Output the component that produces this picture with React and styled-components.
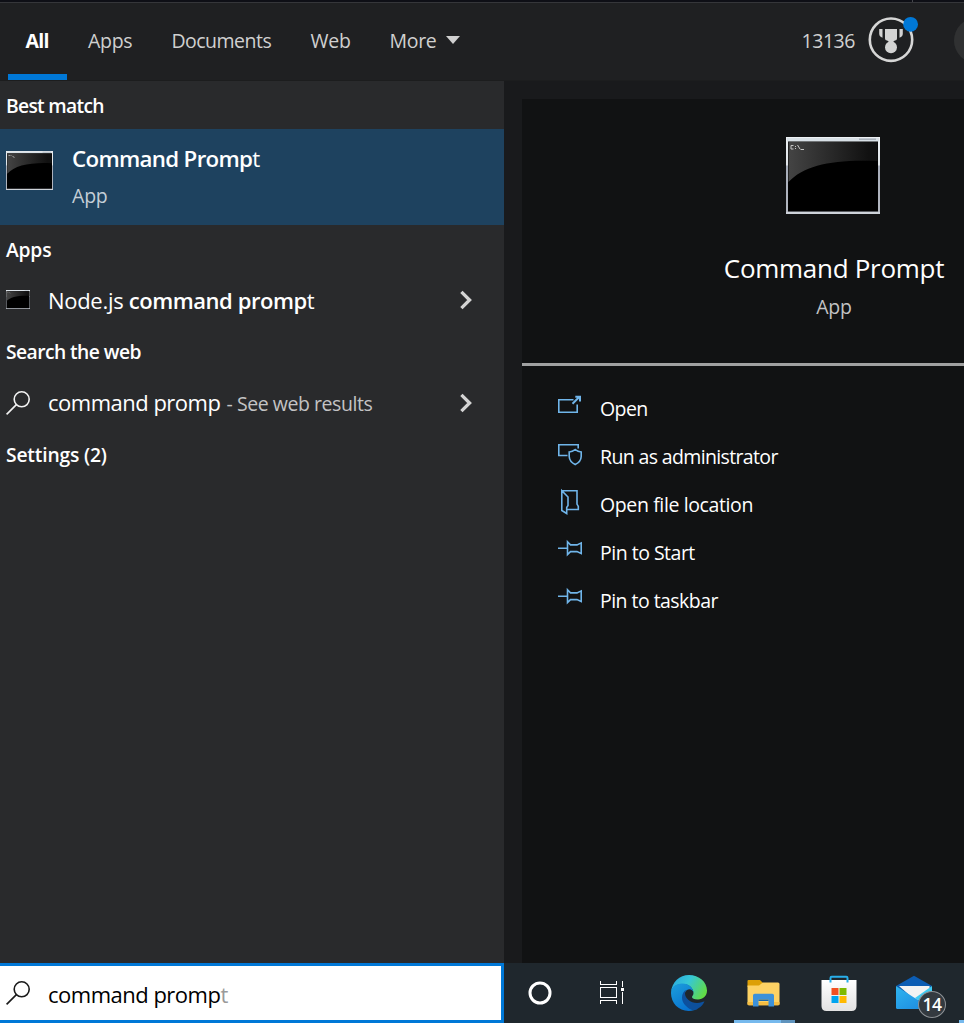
import React from "react";
import styled, { createGlobalStyle } from "styled-components";

const GlobalStyle = createGlobalStyle`
  * { box-sizing: border-box; }
  body {
    margin: 0;
    overflow: hidden;
    background: #111213;
    font-family: "Open Sans", "Noto Sans", sans-serif;
  }
  svg { display: block; flex: none; }
`;

const Screen = styled.div`
  width: 964px;
  height: 1023px;
  display: flex;
  flex-direction: column;
  overflow: hidden;
`;

const TopEdge = styled.div`
  height: 3px;
  flex: none;
  display: flex;
  background: #0e0f16;
  border-bottom: 1px solid #35363a;
`;

const TopTick = styled.div`
  width: 1px;
  height: 2px;
  margin-left: 912px;
  background: #45464b;
`;

const Header = styled.header`
  height: 78px;
  flex: none;
  display: flex;
  background: #1f2022;
  border-bottom: 1px solid #1c1d1e;
`;

const Label = styled.span`
  font-size: ${(p) => p.$size || 19.5}px;
  font-weight: ${(p) => p.$weight || 400};
  letter-spacing: ${(p) => p.$track || 0}px;
  color: ${(p) => p.$color || "#ffffff"};
  line-height: 28px;
  white-space: pre;
`;

const Tabs = styled.nav`
  display: flex;
  flex: none;
  height: 77px;
  padding-left: 8px;
`;

const Tab = styled.div`
  width: ${(p) => p.$width}px;
  height: 77px;
  display: flex;
  gap: 9px;
  padding: 24px 0 0 ${(p) => p.$inset}px;
  border-bottom: 6px solid ${(p) => (p.$active ? "#0078d7" : "transparent")};
`;

const Caret = styled.span`
  width: 0;
  height: 0;
  margin-top: 9px;
  border: 7.5px solid transparent;
  border-top: 8px solid #d0d0d0;
  border-bottom: 0;
`;

const Account = styled.div`
  flex: 1;
  display: flex;
  justify-content: flex-end;
  padding-top: 11px;
`;

const Points = styled.div`
  padding-top: 13px;
  margin-right: 13px;
`;

const Avatar = styled.div`
  width: 10px;
  height: 46px;
  margin: 4px 0 0 36px;
  overflow: hidden;
  &::before {
    content: "";
    display: block;
    width: 45px;
    height: 45px;
    border-radius: 50%;
    background: #303132;
  }
`;

const Body = styled.main`
  flex: 1;
  display: flex;
  min-height: 0;
`;

const Results = styled.section`
  width: 504px;
  flex: none;
  background: #292a2c;
`;

const SectionTitle = styled.div`
  height: ${(p) => p.$height}px;
  display: flex;
  align-items: center;
  padding: ${(p) => p.$drop || 0}px 0 0 6px;
`;

const BestMatch = styled.div`
  height: 96px;
  display: flex;
  gap: 19px;
  padding: 22px 0 0 6px;
  background: #1e425f;
`;

const BestText = styled.div`
  display: flex;
  flex-direction: column;
  gap: 9px;
  margin-top: -6px;
`;

const ResultRow = styled.div`
  height: 51px;
  display: flex;
  align-items: center;
  padding: 0 32px 0 6px;
`;

const RowText = styled.div`
  flex: 1;
  margin-left: 18px;
`;

const RowHint = styled.span`
  margin-left: 1.5px;
`;

const Gutter = styled.aside`
  flex: 1;
  padding: 18px 0 0 18px;
  background: #191a1c;
`;

const Details = styled.div`
  width: 442px;
  height: 864px;
  background: #111213;
`;

const Hero = styled.div`
  height: 267px;
  margin-bottom: 19px;
  padding: 38px 0 0 181px;
  border-bottom: 3px solid #a0a1a1;
  white-space: nowrap;
`;

const HeroInner = styled.div`
  width: 262px;
  display: flex;
  flex-direction: column;
  align-items: center;
`;

const HeroArt = styled.div`
  padding-right: 2px;
`;

const HeroName = styled.div`
  margin-top: 40px;
`;

const HeroKind = styled.div`
  margin-top: 10px;
`;

const Action = styled.div`
  height: 48px;
  display: flex;
  padding: 10px 0 0 36px;
  gap: 18px;
`;

const Taskbar = styled.footer`
  height: 60px;
  flex: none;
  display: flex;
  background: #1f272d;
`;

const SearchBox = styled.div`
  width: 504px;
  flex: none;
  display: flex;
  align-items: center;
  padding: 0 0 0 6px;
  gap: 18px;
  background: #ffffff;
  border: 3px solid #0078d7;
  border-left: 0;
`;

const SearchText = styled.div`
  padding-top: 2px;
`;

const SystemButton = styled.div`
  width: 72px;
  display: flex;
  align-items: center;
  justify-content: center;
`;

const TaskApps = styled.div`
  display: flex;
  flex: none;
  margin-left: 3px;
`;

const TaskApp = styled.div`
  width: 75px;
  height: 60px;
  display: flex;
  justify-content: center;
  padding-top: 12px;
  position: relative;
`;

const RunningBar = styled.div`
  position: absolute;
  left: 8px;
  bottom: 0;
  width: 61px;
  height: 3px;
  background: #5f93bd;
  border-left: 47px solid #76b9ed;
`;

const NextBar = styled.div`
  align-self: flex-end;
  width: 5px;
  height: 3px;
  margin-left: 8px;
  background: #76b9ed;
`;

const CountBadge = styled.div`
  position: absolute;
  left: 42px;
  top: 28px;
  width: 28px;
  height: 27px;
  border-radius: 50%;
  display: flex;
  align-items: center;
  justify-content: center;
  padding-bottom: 1px;
  border: 1px solid #8d9296;
  background: #333a40;
`;

function ConsoleIcon({ width, height, id, detail }) {
  return (
    <svg width={width} height={height} viewBox="0 0 94 77" preserveAspectRatio="none">
      <defs>
        <linearGradient id={id} x1="0" x2="1" y1="0" y2="0">
          <stop offset="0" stopColor="#444" />
          <stop offset="0.9" stopColor="#111" />
        </linearGradient>
        <linearGradient id={id + "f"} x1="0" x2="0" y1="0" y2="1">
          <stop offset="0" stopColor="#eef1f4" />
          <stop offset="0.36" stopColor="#dfe4e8" />
          <stop offset="0.38" stopColor="#a7adba" />
          <stop offset="1" stopColor="#b3b7c0" />
        </linearGradient>
      </defs>
      <rect width="94" height="77" fill={`url(#${id}f)`} />
      <rect x="1" y="1" width="92" height="3.4" fill="#d8e0e6" />
      <rect x="73" y="1.5" width="17" height="1.5" fill="#aab2bb" />
      <rect x="2" y="4.5" width="90" height="70" fill="#000" />
      <path d="M2.5 5H91.500V24C48 22 18 28 2.500 45Z" fill={`url(#${id})`} />
      <path d="M0 76H94" stroke="#cdd2d9" strokeWidth="2" />
      {detail ? (
        <path
          d="M7.500 8.500H5V12H7.500M9.500 9V10M9.500 11V12M11.500 8L14 12M14.500 12.500H18"
          stroke="#c5c5c5"
          fill="none"
        />
      ) : (
        <path d="M5 9H9M11 9H12M13 10L17 13" stroke="#999" strokeWidth="2" />
      )}
    </svg>
  );
}

const SearchGlyph = ({ color }) => (
  <svg width="24" height="24" viewBox="0 0 24 24" fill="none" stroke={color} strokeWidth="1.6">
    <circle cx="15.7" cy="8.3" r="7.5" />
    <path d="M10.4 13.6L.6 23.4" />
  </svg>
);

const Chevron = () => (
  <svg width="12" height="20" viewBox="0 0 12 20" fill="none" stroke="#d4d4d4" strokeWidth="3.3">
    <path d="M1.4 1.8L9.600 10L1.400 18.200" />
  </svg>
);

const Medal = () => (
  <svg width="50" height="50" viewBox="0 0 50 50">
    <circle cx="23" cy="25.7" r="21.2" fill="none" stroke="#d6d6d6" strokeWidth="2.6" />
    <path
      d="M17 15H29V24.500Q29 26.500 27 26.500L25.500 27.200V28.500H20.500V27.200L19 26.500Q17 26.500 17 24.500Z"
      fill="#d3d3d3"
    />
    <circle cx="23" cy="33.2" r="6" fill="#d3d3d3" />
    <path
      d="M11.200 15H14.500V23.800L12.600 22.700Q11.200 21.600 11.200 20ZM34.800 15H31.500V23.800L33.400 22.700Q34.800 21.600 34.800 20Z"
      fill="#d3d3d3"
    />
    <circle cx="42.6" cy="10.3" r="7.4" fill="#0078d7" />
  </svg>
);

const actionArt = {
  open: (
    <>
      <path d="M15.500 4.700H.8V17.200H19.200V9.500" />
      <path d="M14.500 8.800L21.500 1.800M17.300 1.800H22V6.500" strokeWidth="2" />
    </>
  ),
  admin: (
    <path d="M9.500 12.500H.8V1.800H20.200V5.400M17.200 6.600Q14.300 8.800 11.200 9V13.500Q11.500 18.800 17.200 21.500Q23 18.800 23.200 13.500V9Q20.100 8.800 17.200 6.600Z" />
  ),
  folder: (
    <path d="M3.800 -.2H19V13L20.300 15.500V18.500H9.500M3.800 -.2V19.500L8.700 22.500V16.500L10 14.500V6Z" />
  ),
  pin: (
    <path d="M0 9.300H9.500M9.500 2.800L12.500 5.900H19L23.200 3.900V14.500L19 12.600H12.500L9.500 15.600Z" />
  ),
};

const ActionIcon = ({ name }) => (
  <svg
    width="24"
    height="26"
    viewBox="0 0 24 26"
    overflow="visible"
    fill="none"
    stroke="#70b5ea"
    strokeWidth="1.6"
  >
    {actionArt[name]}
  </svg>
);

const ACTIONS = [
  { icon: "open", text: "Open", track: -0.6 },
  { icon: "admin", text: "Run as administrator", track: -0.64 },
  { icon: "folder", text: "Open file location", track: -0.38 },
  { icon: "pin", text: "Pin to Start", track: -0.5 },
  { icon: "pin", text: "Pin to taskbar", track: -0.54 },
];

const TaskViewIcon = () => (
  <svg
    width="25"
    height="24"
    viewBox="0 0 25 24"
    fill="none"
    stroke="#fff"
    strokeWidth="1.2"
    shapeRendering="crispEdges"
  >
    <path d="M.5 0V3.500H16.500V0M.5 6.500H16.500V16.500H.5ZM.5 23V19.500H16.500V23M22.500 0V6M22.500 11V23" />
    <path d="M21 7H24V10H21Z" fill="#fff" stroke="none" />
  </svg>
);

const EdgeIcon = () => (
  <svg width="36" height="36" viewBox="0 0 36 36">
    <defs>
      <linearGradient id="edgeTop" x1="0" y1=".2" x2="1" y2=".6">
        <stop offset="0" stopColor="#2aa9e0" />
        <stop offset=".45" stopColor="#36c7d6" />
        <stop offset="1" stopColor="#62dc45" />
      </linearGradient>
      <linearGradient id="edgeLeft" x1="0" y1="0" x2=".6" y2="1">
        <stop offset="0" stopColor="#1d9fdc" />
        <stop offset="1" stopColor="#0873d0" />
      </linearGradient>
    </defs>
    <path
      d="M0 17C1 7 8.500 0 18 0C28 0 36 7 36 15.500C36 21 32 24.500 27 24.500C23 24.500 21 23.300 21 22C21 21 22.500 20.500 22.500 18C22.500 14 19 9 11 9C5 9 1 13 0 17Z"
      fill="url(#edgeTop)"
    />
    <path
      d="M0 18C0 12 5 8.500 11 8.500C18.500 8.500 22.500 13.500 22.500 18C22 14.500 18.500 13.500 16 15C11 18 13 32 23 35.200C10 38.500 0 29.500 0 18Z"
      fill="url(#edgeLeft)"
    />
    <path
      d="M16 14.500C10 17 9.500 25 14 30C19 35.500 24 36.500 27 33.500C30.500 31.500 32.500 29 33.500 26.500C32.500 26 30 28 26 28C19.500 28 14 23 14 18.500C14 16.500 15 15 16 14.500Z"
      fill="#0d509d"
    />
  </svg>
);

const ExplorerIcon = () => (
  <svg width="33" height="36" viewBox="0 0 33 36">
    <path d="M.5 6Q.5 5 1.500 5H13L15.500 7.500V12H.5Z" fill="#dda006" />
    <path
      d="M.5 10.500H12L15.800 7.500H31Q32.500 7.500 32.500 9V29Q32.500 30.300 31 30.300H2Q.5 30.300 .5 29Z"
      fill="#fdd264"
    />
    <path d="M.5 27H32.500V29Q32.500 30.300 31 30.300H2Q.5 30.300 .5 29Z" fill="#f4bd42" />
    <path
      d="M6 31.500V20.500Q6 18.800 7.700 18.800H25.300Q27 18.800 27 20.500V31.500H21.500V24.500H11.500V31.500Z"
      fill="#3c91d9"
    />
    <path d="M11.500 24.500H21.500V26H11.500Z" fill="#1768ad" />
  </svg>
);

const StoreIcon = () => (
  <svg width="36" height="37" viewBox="0 0 36 37">
    <defs>
      <linearGradient id="storeBag" x1="0" y1="0" x2="0" y2="1">
        <stop stopColor="#fff" />
        <stop offset="1" stopColor="#e2e2e2" />
      </linearGradient>
    </defs>
    <path d="M.5 5H35.500V31Q35.500 36 30.500 36H5.500Q.5 36 .5 31Z" fill="url(#storeBag)" />
    <path
      d="M9.500 7.500V3Q9.500 1.800 10.700 1.800H25.300Q26.500 1.800 26.500 3V7.500"
      fill="none"
      stroke="#28afea"
      strokeWidth="2"
    />
    <path d="M10.500 13H17.500V20H10.500Z" fill="#f25022" />
    <path d="M18.500 13H25.500V20H18.500Z" fill="#7fba00" />
    <path d="M10.500 21H17.500V28H10.500Z" fill="#00a4ef" />
    <path d="M18.500 21H25.500V28H18.500Z" fill="#ffb900" />
  </svg>
);

const MailIcon = () => (
  <svg width="36" height="36" viewBox="0 0 36 36">
    <defs>
      <linearGradient id="mailBody" x1="0" y1="0" x2="1" y2="1">
        <stop stopColor="#2fb5f0" />
        <stop offset="1" stopColor="#1b86dd" />
      </linearGradient>
    </defs>
    <path d="M0 11L18 .8L36 11L18 24Z" fill="#0c5db4" />
    <path d="M3 11H33.500L34 18L20 26Z" fill="#f3f3f3" />
    <path d="M19 23L36 11V32.500Q36 34 34.500 34Z" fill="#3fcbf3" />
    <path d="M0 11L36 34H1.500Q0 34 0 32.500Z" fill="url(#mailBody)" />
  </svg>
);

export default function App() {
  return (
    <Screen>
      <GlobalStyle />
      <TopEdge>
        <TopTick />
      </TopEdge>
      <Header>
        <Tabs>
          <Tab $active $width={59} $inset={17.5}>
            <Label $weight={700} $track={-0.7}>All</Label>
          </Tab>
          <Tab $width={84} $inset={21}>
            <Label $color="#d0d0d0" $track={-0.3}>Apps</Label>
          </Tab>
          <Tab $width={139} $inset={20.4}>
            <Label $color="#d0d0d0" $track={-0.5}>Documents</Label>
          </Tab>
          <Tab $width={79} $inset={20.5}>
            <Label $color="#d0d0d0" $track={-0.2}>Web</Label>
          </Tab>
          <Tab $width={100} $inset={20.5}>
            <Label $color="#d0d0d0" $track={-0.3}>More</Label>
            <Caret />
          </Tab>
        </Tabs>
        <Account>
          <Points>
            <Label $color="#d0d0d0" $track={-0.45}>13136</Label>
          </Points>
          <Medal />
          <Avatar />
        </Account>
      </Header>
      <Body>
        <Results>
          <SectionTitle $height={48} $drop={2}>
            <Label $size={19.3} $weight={600} $track={-0.7}>Best match</Label>
          </SectionTitle>
          <BestMatch>
            <ConsoleIcon width={47} height={39} id="cmdMedium" />
            <BestText>
              <Label $size={22.3} $weight={600} $track={-0.68}>
                Command Promp<Label as="span" $size={22.3} $track={-0.3}>t</Label>
              </Label>
              <Label $color="#c5cfd7" $track={-0.2}>App</Label>
            </BestText>
          </BestMatch>
          <SectionTitle $height={49}>
            <Label $size={19.3} $weight={600} $track={-0.2}>Apps</Label>
          </SectionTitle>
          <ResultRow>
            <ConsoleIcon width={24} height={19} id="cmdSmall" />
            <RowText>
              <Label $size={22} $track={-0.3}>Node.js </Label>
              <Label $size={22} $weight={600} $track={-0.45}>command promp</Label>
              <Label $size={22}>t</Label>
            </RowText>
            <Chevron />
          </ResultRow>
          <SectionTitle $height={52} $drop={1}>
            <Label $size={19.3} $weight={600} $track={-0.57}>Search the web</Label>
          </SectionTitle>
          <ResultRow>
            <SearchGlyph color="#f2f2f2" />
            <RowText>
              <Label $size={22} $track={-0.5}>command promp</Label>
              <RowHint>
                <Label $color="#c3c3c4" $track={-0.45}> - See web results</Label>
              </RowHint>
            </RowText>
            <Chevron />
          </ResultRow>
          <SectionTitle $height={51} $drop={2}>
            <Label $size={19.3} $weight={600} $track={-0.18}>Settings (2)</Label>
          </SectionTitle>
        </Results>
        <Gutter>
          <Details>
            <Hero>
              <HeroInner>
                <HeroArt>
                  <ConsoleIcon width={94} height={77} id="cmdLarge" detail />
                </HeroArt>
                <HeroName>
                  <Label $size={26} $track={-0.29}>Command Prompt</Label>
                </HeroName>
                <HeroKind>
                  <Label $color="#c3c3c4" $track={-0.2}>App</Label>
                </HeroKind>
              </HeroInner>
            </Hero>
            {ACTIONS.map((a) => (
              <Action key={a.text}>
                <ActionIcon name={a.icon} />
                <Label $track={a.track}>{a.text}</Label>
              </Action>
            ))}
          </Details>
        </Gutter>
      </Body>
      <Taskbar>
        <SearchBox>
          <SearchGlyph color="#1a1a1a" />
          <SearchText>
            <Label $size={22} $track={-0.5} $color="#000">command promp</Label>
            <Label $size={22} $color="#9a9a9a">t</Label>
          </SearchText>
        </SearchBox>
        <SystemButton>
          <svg width="24" height="24" viewBox="0 0 24 24" fill="none">
            <circle cx="12" cy="12" r="10" stroke="#ffffff" strokeWidth="3" />
          </svg>
        </SystemButton>
        <SystemButton>
          <TaskViewIcon />
        </SystemButton>
        <TaskApps>
          <TaskApp>
            <EdgeIcon />
          </TaskApp>
          <TaskApp>
            <ExplorerIcon />
            <RunningBar />
          </TaskApp>
          <TaskApp>
            <StoreIcon />
          </TaskApp>
          <TaskApp>
            <MailIcon />
            <CountBadge>
              <Label $size={17.5} $weight={600} $track={-0.6}>14</Label>
            </CountBadge>
          </TaskApp>
          <NextBar />
        </TaskApps>
      </Taskbar>
    </Screen>
  );
}
